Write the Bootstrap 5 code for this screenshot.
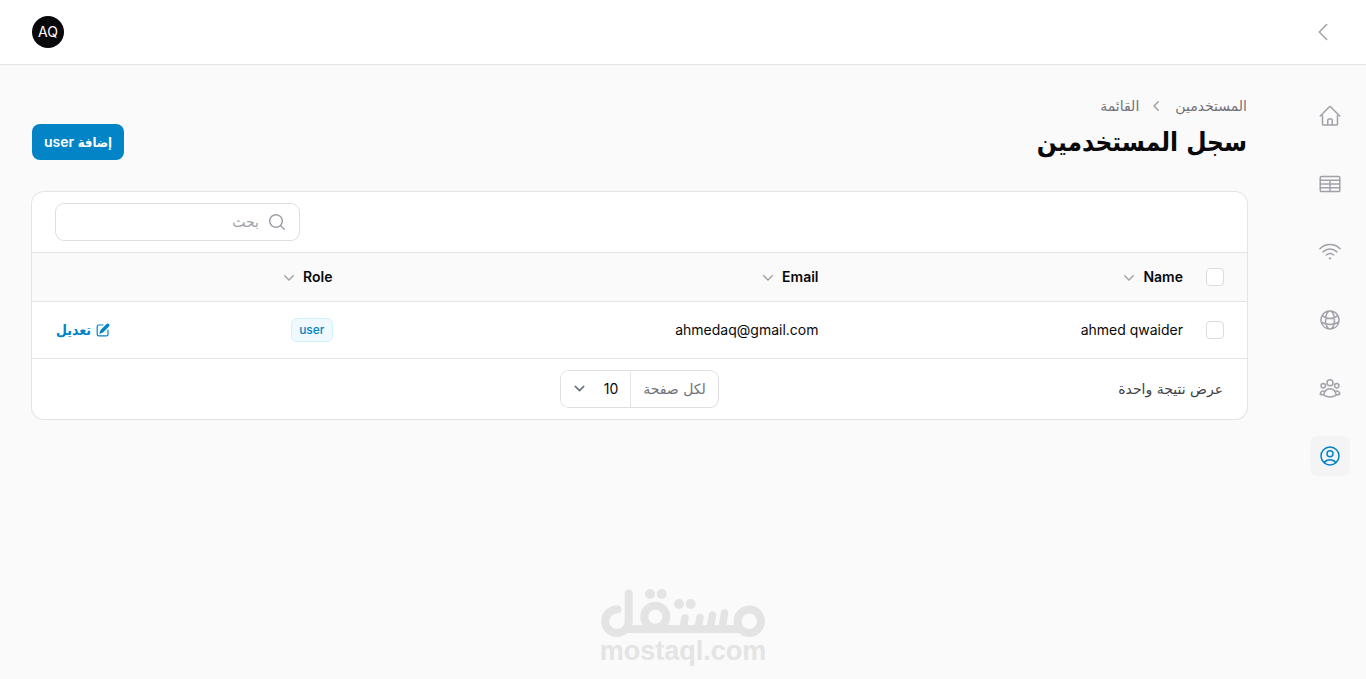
<!DOCTYPE html>
<html lang="ar" dir="rtl">
<head>
<meta charset="utf-8">
<meta name="viewport" content="width=device-width, initial-scale=1">
<title>سجل المستخدمين</title>
<link href="https://cdn.jsdelivr.net/npm/bootstrap@5.3.0/dist/css/bootstrap.min.css" rel="stylesheet">
<style>
  :root { --brand: #0284c7; --line: #e4e4e7; --muted: #71717a; --icon: #a1a1aa; --ink: #09090b; }
  body { background: #fafafa; color: var(--ink); font-family: Inter, "DejaVu Sans Condensed", "DejaVu Sans", sans-serif; font-size: 14px; line-height: 20px; min-height: 100vh; }
  .ar { font-family: "DejaVu Sans", sans-serif; font-size: 14px; }
  .ar-bold { font-family: "DejaVu Sans Condensed", "DejaVu Sans", sans-serif; font-weight: 700; }
  .topbar { height: 64px; box-shadow: 0 0 0 1px var(--line); padding: 0 31px 0 32px; }
  .avatar { width: 32px; height: 32px; background: var(--ink); color: #fff; border: 0; }
  .plain { border: 0; background: none; padding: 0; color: var(--icon); line-height: 0; }
  .icon { width: 24px; height: 24px; fill: none; stroke: currentColor; stroke-width: 1.5; stroke-linecap: round; stroke-linejoin: round; }
  .mini { width: 20px; height: 20px; fill: currentColor; flex: none; }
  .mini-sm { width: 16px; height: 16px; }
  .sidebar { width: 87px; padding: 32px 16px; gap: 28px; }
  .sidebar a { width: 40px; height: 40px; border-radius: 8px; color: var(--icon); }
  .sidebar a.active { background: #f4f4f5; color: var(--brand); }
  .main-area { padding: 32px 0 32px 32px; margin-inline-start: 32px; min-width: 0; }
  .crumbs { gap: 8px; margin-bottom: 8px; color: var(--muted); }
  .crumbs a { color: inherit; text-decoration: none; }
  .crumbs .mini { color: var(--icon); }
  .page-title { font-size: 26px; line-height: 36px; margin: 0; }
  .btn-brand { --bs-btn-bg: #0284c7; --bs-btn-color: #fff; --bs-btn-hover-bg: #0ea5e9; --bs-btn-hover-color: #fff; --bs-btn-border-width: 0; --bs-btn-border-radius: 8px; --bs-btn-padding-x: 12px; --bs-btn-padding-y: 8px; --bs-btn-font-size: 14px; --bs-btn-font-weight: 600; --bs-btn-line-height: 20px; }
  .btn-brand .ar-bold { font-size: 13px; line-height: 16px; }
  .panel { background: #fff; border-radius: 12px; box-shadow: 0 0 0 1px var(--line), 0 1px 2px rgba(0,0,0,.05); margin-top: 32px; overflow: hidden; }
  .toolbar { padding: 12px 24px; border-bottom: 1px solid var(--line); }
  .field { height: 36px; border-radius: 8px; box-shadow: 0 0 0 1px #dfdfe2; background: #fff; overflow: hidden; }
  .search { width: 243px; padding: 0 12px; gap: 8px; color: var(--icon); }
  .search input { border: 0; outline: 0; padding: 0; min-width: 0; background: none; color: var(--ink); }
  .search input::placeholder { color: var(--icon); }
  .users { table-layout: fixed; margin: 0; --bs-table-bg: transparent; --bs-table-color: var(--ink); border-color: var(--line); }
  .users th, .users td { padding: 0 12px; vertical-align: middle; text-align: right; border-bottom: 1px solid var(--line); }
  .users th { height: 48px; background: #fafafa; font-weight: 600; }
  .users td { height: 57px; }
  .users tr > :first-child { padding-right: 23px; }
  .users tr > :last-child { padding-left: 24px; }
  .col-check { width: 52px; } .col-name { width: 30%; } .col-mail { width: 40%; } .col-role { width: 90px; }
  .sorter { font-weight: 600; color: var(--ink); line-height: 20px; gap: 4px; display: inline-flex; align-items: center; }
  .sorter .mini { color: var(--icon); }
  .users .form-check-input { width: 18px; height: 18px; margin: 0; border: 1px solid #dcdce0; border-radius: 4px; display: block; float: none; }
  .role-tag { display: inline-block; font-size: 12px; font-weight: 500; line-height: 16px; padding: 3px 7px; border: 1px solid #cdf3fc; border-radius: 6px; background: #f0f9ff; color: var(--brand); }
  .edit { color: var(--brand); text-decoration: none; display: inline-flex; align-items: center; gap: 4px; }
  .foot { display: grid; grid-template-columns: 1fr auto 1fr; align-items: center; padding: 12px 24px; color: #3f3f46; }
  .per-page label { padding: 8px 12px; color: var(--muted); border-left: 1px solid var(--line); }
  .per-page select { width: 69px; border: 0; border-radius: 0; padding: 8px 12px; font-size: 14px; line-height: 20px; color: var(--ink); background: #fff url("data:image/svg+xml,%3Csvg xmlns='http://www.w3.org/2000/svg' viewBox='0 0 20 20' fill='none'%3E%3Cpath stroke='%236b7280' stroke-linecap='round' stroke-linejoin='round' stroke-width='1.5' d='m6 8 4 4 4-4'/%3E%3C/svg%3E") left 8px center / 21px no-repeat; }
  .watermark { position: absolute; bottom: 14px; left: 0; right: 0; color: #e4e4e4; pointer-events: none; }
  .watermark svg { width: 166px; height: 50px; display: block; }
  .watermark span { font: bold 27px/27px "Liberation Sans", Arial, sans-serif; }
</style>
</head>
<body class="position-relative">
<header class="topbar bg-white d-flex align-items-center justify-content-between position-relative">
  <button class="plain" type="button" aria-label="طي القائمة"><svg class="icon" viewBox="0 0 24 24"><path d="M15.75 19.5 8.25 12l7.5-7.5"/></svg></button>
  <button class="avatar rounded-circle p-0" type="button">AQ</button>
</header>

<div class="d-flex">
  <nav class="sidebar d-flex flex-column flex-shrink-0" aria-label="القائمة الجانبية">
    <a class="d-flex align-items-center justify-content-center" href="#" aria-label="الرئيسية"><svg class="icon" viewBox="0 0 24 24"><path d="m2.25 12 8.954-8.955c.44-.439 1.152-.439 1.591 0L21.75 12M4.5 9.75v10.125c0 .621.504 1.125 1.125 1.125H9.75v-4.875c0-.621.504-1.125 1.125-1.125h2.25c.621 0 1.125.504 1.125 1.125V21h4.125c.621 0 1.125-.504 1.125-1.125V9.75M8.25 21h8.25"/></svg></a>
    <a class="d-flex align-items-center justify-content-center" href="#" aria-label="الجداول"><svg class="icon" viewBox="0 0 24 24"><rect x="2.25" y="4.5" width="19.5" height="15" rx="1.1"/><path d="M2.25 8.25h19.5M2.25 12h19.5M2.25 15.75h19.5M12 8.25V19.5"/></svg></a>
    <a class="d-flex align-items-center justify-content-center" href="#" aria-label="الشبكة"><svg class="icon" viewBox="0 0 24 24"><path d="M8.288 15.038a5.25 5.25 0 0 1 7.424 0M5.106 11.856c3.807-3.808 9.98-3.808 13.788 0M1.924 8.674c5.565-5.565 14.587-5.565 20.152 0M12.53 18.22l-.53.53-.53-.53a.75.75 0 0 1 1.06 0Z"/></svg></a>
    <a class="d-flex align-items-center justify-content-center" href="#" aria-label="المواقع"><svg class="icon" viewBox="0 0 24 24"><path d="M12 21a9.004 9.004 0 0 0 8.716-6.747M12 21a9.004 9.004 0 0 1-8.716-6.747M12 21c2.485 0 4.5-4.03 4.5-9S14.485 3 12 3m0 18c-2.485 0-4.5-4.03-4.5-9S9.515 3 12 3m0 0a8.997 8.997 0 0 1 7.843 4.582M12 3a8.997 8.997 0 0 0-7.843 4.582m15.686 0A11.953 11.953 0 0 1 12 10.5c-2.998 0-5.74-1.1-7.843-2.918m15.686 0A8.959 8.959 0 0 1 21 12c0 .778-.099 1.533-.284 2.253m0 0A17.919 17.919 0 0 1 12 16.5c-3.162 0-6.133-.815-8.716-2.247m0 0A9.015 9.015 0 0 1 3 12c0-1.605.42-3.113 1.157-4.418"/></svg></a>
    <a class="d-flex align-items-center justify-content-center" href="#" aria-label="المجموعات"><svg class="icon" viewBox="0 0 24 24"><path d="M18 18.72a9.094 9.094 0 0 0 3.741-.479 3 3 0 0 0-4.682-2.72m.94 3.198.001.031c0 .225-.012.447-.037.666A11.944 11.944 0 0 1 12 21c-2.17 0-4.207-.576-5.963-1.584A6.062 6.062 0 0 1 6 18.719m12 0a5.971 5.971 0 0 0-.941-3.197m0 0A5.995 5.995 0 0 0 12 12.75a5.995 5.995 0 0 0-5.058 2.772m0 0a3 3 0 0 0-4.681 2.72 8.986 8.986 0 0 0 3.74.477m.94-3.197a5.971 5.971 0 0 0-.94 3.197M15 6.75a3 3 0 1 1-6 0 3 3 0 0 1 6 0Zm6 3a2.25 2.25 0 1 1-4.5 0 2.25 2.25 0 0 1 4.5 0Zm-13.5 0a2.25 2.25 0 1 1-4.5 0 2.25 2.25 0 0 1 4.5 0Z"/></svg></a>
    <a class="active d-flex align-items-center justify-content-center" href="#" aria-label="المستخدمين" aria-current="page"><svg class="icon" viewBox="0 0 24 24"><path d="M17.982 18.725A7.488 7.488 0 0 0 12 15.75a7.488 7.488 0 0 0-5.982 2.975m11.963 0a9 9 0 1 0-11.963 0m11.963 0A8.966 8.966 0 0 1 12 21a8.966 8.966 0 0 1-5.982-2.275M15 9.75a3 3 0 1 1-6 0 3 3 0 0 1 6 0Z"/></svg></a>
  </nav>

  <main class="main-area flex-grow-1">
    <div class="d-flex align-items-end justify-content-between">
      <div>
        <nav class="crumbs ar d-flex align-items-center" aria-label="مسار التنقل">
          <a href="#">المستخدمين</a>
          <svg class="mini" viewBox="0 0 20 20"><path d="M11.78 5.22a.75.75 0 0 1 0 1.06L8.06 10l3.72 3.72a.75.75 0 1 1-1.06 1.06l-4.25-4.25a.75.75 0 0 1 0-1.06l4.25-4.25a.75.75 0 0 1 1.06 0Z"/></svg>
          <a href="#">القائمة</a>
        </nav>
        <h1 class="page-title ar-bold">سجل المستخدمين</h1>
      </div>
      <button class="btn btn-brand" type="button"><span class="ar-bold">إضافة</span> user</button>
    </div>

    <section class="panel">
      <div class="toolbar d-flex justify-content-end">
        <div class="field search d-flex align-items-center">
          <svg class="mini" viewBox="0 0 20 20"><path d="M9 3.5a5.5 5.5 0 1 0 0 11 5.5 5.5 0 0 0 0-11ZM2 9a7 7 0 1 1 12.452 4.391l3.328 3.329a.75.75 0 1 1-1.06 1.06l-3.329-3.328A7 7 0 0 1 2 9Z"/></svg>
          <input class="ar flex-grow-1" type="search" placeholder="بحث" aria-label="بحث">
        </div>
      </div>
      <table class="table users">
        <colgroup><col class="col-check"><col class="col-name"><col class="col-mail"><col class="col-role"><col></colgroup>
        <thead>
          <tr>
            <th><input class="form-check-input" type="checkbox" aria-label="تحديد الكل"></th>
            <th><button class="plain sorter" type="button">Name <svg class="mini" viewBox="0 0 20 20"><path d="M5.22 8.22a.75.75 0 0 1 1.06 0L10 11.94l3.72-3.72a.75.75 0 1 1 1.06 1.06l-4.25 4.25a.75.75 0 0 1-1.06 0L5.22 9.28a.75.75 0 0 1 0-1.06Z"/></svg></button></th>
            <th><button class="plain sorter" type="button">Email <svg class="mini" viewBox="0 0 20 20"><path d="M5.22 8.22a.75.75 0 0 1 1.06 0L10 11.94l3.72-3.72a.75.75 0 1 1 1.06 1.06l-4.25 4.25a.75.75 0 0 1-1.06 0L5.22 9.28a.75.75 0 0 1 0-1.06Z"/></svg></button></th>
            <th><button class="plain sorter" type="button">Role <svg class="mini" viewBox="0 0 20 20"><path d="M5.22 8.22a.75.75 0 0 1 1.06 0L10 11.94l3.72-3.72a.75.75 0 1 1 1.06 1.06l-4.25 4.25a.75.75 0 0 1-1.06 0L5.22 9.28a.75.75 0 0 1 0-1.06Z"/></svg></button></th>
            <th></th>
          </tr>
        </thead>
        <tbody>
          <tr>
            <td><input class="form-check-input" type="checkbox" aria-label="تحديد ahmed qwaider"></td>
            <td>ahmed qwaider</td>
            <td>ahmedaq@gmail.com</td>
            <td><span class="role-tag">user</span></td>
            <td><div class="d-flex justify-content-end"><a class="edit ar-bold" href="#"><svg class="mini mini-sm" viewBox="0 0 20 20"><path d="m5.433 13.917 1.262-3.155A4 4 0 0 1 7.58 9.42l6.92-6.918a2.121 2.121 0 0 1 3 3l-6.92 6.918c-.383.383-.84.685-1.343.886l-3.154 1.262a.5.5 0 0 1-.65-.65Z"/><path d="M3.5 5.75c0-.69.56-1.25 1.25-1.25H10A.75.75 0 0 0 10 3H4.75A2.75 2.75 0 0 0 2 5.75v9.5A2.75 2.75 0 0 0 4.75 18h9.5A2.75 2.75 0 0 0 17 15.25V10a.75.75 0 0 0-1.5 0v5.25c0 .69-.56 1.25-1.25 1.25h-9.5c-.69 0-1.25-.56-1.25-1.25v-9.5Z"/></svg>تعديل</a></div></td>
          </tr>
        </tbody>
      </table>
      <div class="foot">
        <span class="ar">عرض نتيجة واحدة</span>
        <div class="field per-page d-flex">
          <label class="ar" for="perPage">لكل صفحة</label>
          <select class="form-select" id="perPage"><option>10</option><option>25</option><option>50</option></select>
        </div>
      </div>
    </section>
  </main>
</div>

<div class="watermark d-flex flex-column align-items-center" dir="ltr">
  <svg viewBox="0 0 166 50" fill="none" stroke="currentColor" stroke-width="8" stroke-linecap="round" role="img" aria-label="مستقل">
    <path d="M17.500 21.500A11.800 11.800 0 1 0 28.700 33V5.500M28.700 41H139"/>
    <circle cx="55.3" cy="28.700" r="11"/><circle cx="149.300" cy="33.300" r="11.700"/>
    <path stroke-width="7.500" d="M85 30l-2 11M100 29.500l-2 11M112.500 27L110 41M124.500 25L122 41"/>
    <g fill="currentColor" stroke="none"><circle cx="50" cy="6" r="5"/><circle cx="61.700" cy="6" r="5"/><circle cx="79" cy="16" r="5"/><circle cx="90.700" cy="16" r="5"/></g>
  </svg>
  <span>mostaql.com</span>
</div>
<script src="https://cdn.jsdelivr.net/npm/bootstrap@5.3.0/dist/js/bootstrap.bundle.min.js"></script>
</body>
</html>
